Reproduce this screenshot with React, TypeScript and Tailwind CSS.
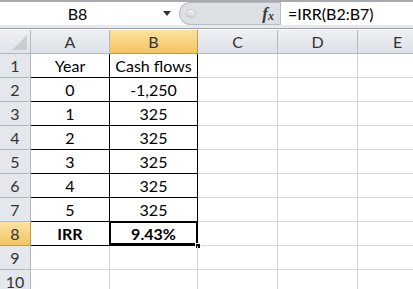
import React from 'react';

// column widths include the right border line
const cols = [
  { key: 'A', w: 'w-[79px]' },
  { key: 'B', w: 'w-[88px]' },
  { key: 'C', w: 'w-[80px]' },
  { key: 'D', w: 'w-[80px]' },
  { key: 'E', w: 'w-[80px]' },
];

const data: [string, string][] = [
  ['Year', 'Cash flows'],
  ['0', '-1,250'],
  ['1', '325'],
  ['2', '325'],
  ['3', '325'],
  ['4', '325'],
  ['5', '325'],
  ['IRR', '9.43%'],
  ['', ''],
  ['', ''],
];

const FormulaBar: React.FC = () => (
  <div className="border-t-2 border-[#a7abb0]">
    <div className="flex h-[23px] items-stretch bg-white">
      <div className="relative flex w-[179px] shrink-0 items-center">
        <span className="w-[155px] text-center text-[16px] text-black">B8</span>
        <span className="absolute left-[163px] top-[9px] h-0 w-0 border-x-[4px] border-t-[5px] border-x-transparent border-t-[#333]" />
      </div>
      <div className="flex w-[101px] shrink-0 items-center rounded-l-full border border-r-0 border-[#b8bcc2] bg-[#dcdfe3]">
        <span className="ml-[6px] h-[9px] w-[10px] rounded-full border border-[#c4c7cc] bg-gradient-to-b from-[#f4f5f6] to-[#cfd2d6]" />
        <span className="ml-auto mr-[6px] font-['Liberation_Serif'] text-[17px] font-bold italic leading-none text-[#3a3a3a]">
          f<span className="relative top-[1px] text-[12px]">x</span>
        </span>
      </div>
      <div className="flex flex-1 items-center border-l border-[#b8bcc2] pl-[7px] text-[16px] text-black">
        =IRR(B2:B7)
      </div>
    </div>
    <div className="h-[4px] border-b border-[#9ea4ab] bg-[#e6e9ed]" />
  </div>
);

const App: React.FC = () => {
  return (
    <div className="h-[289px] w-[413px] overflow-hidden bg-white font-['Lato',sans-serif] text-[16px] text-black">
      <FormulaBar />

      {/* column headers */}
      <div className="mt-px flex h-[24px]">
        <div className="relative w-[31px] shrink-0 border-r border-b border-[#b2b8bf] bg-gradient-to-b from-[#eef0f3] to-[#e0e4e9]">
          <svg className="absolute bottom-[3px] right-[3px]" width="15" height="15" viewBox="0 0 15 15">
            <polygon points="15,0 15,15 0,15" fill="#c9cdd2" />
          </svg>
        </div>
        {cols.map((c) => (
          <div
            key={c.key}
            className={`${c.w} flex shrink-0 items-center justify-center border-r border-b ${
              c.key === 'B'
                ? 'border-[#c29b46] bg-gradient-to-b from-[#fbe3a0] to-[#f3c35f]'
                : 'border-[#b2b8bf] bg-gradient-to-b from-[#eef0f3] to-[#dde2e8]'
            } text-[#333]`}
          >
            {c.key}
          </div>
        ))}
      </div>

      {/* rows */}
      {data.map(([a, b], i) => {
        const row = i + 1;
        const sel = row === 8;
        const boxed = row <= 8;
        return (
          <div key={row} className="flex h-[24px]">
            <div
              className={`flex w-[31px] shrink-0 items-center justify-center border-r border-b ${
                sel
                  ? 'border-[#c29b46] bg-gradient-to-b from-[#fbe3a0] to-[#f3c35f]'
                  : 'border-[#b2b8bf] bg-[#e4e8ed]'
              } text-[#333]`}
            >
              {row}
            </div>
            <div
              className={`flex w-[79px] shrink-0 items-center justify-center border-r border-b ${
                boxed ? 'border-black' : 'border-[#d4d4d4]'
              } ${sel ? 'font-bold' : ''}`}
            >
              {a}
            </div>
            <div
              className={`relative flex w-[88px] shrink-0 items-center justify-center border-r border-b ${
                boxed ? 'border-black' : 'border-[#d4d4d4]'
              } ${sel ? 'font-bold' : ''}`}
            >
              {sel && (
                <>
                  <div className="pointer-events-none absolute -left-[1px] -top-[1px] h-[24px] w-[89px] border-2 border-black" />
                  <div className="absolute -bottom-[4px] -right-[4px] h-[6px] w-[6px] border border-white bg-black" />
                </>
              )}
              {b}
            </div>
            <div className="w-[80px] shrink-0 border-r border-b border-[#d4d4d4]" />
            <div className="w-[80px] shrink-0 border-r border-b border-[#d4d4d4]" />
            <div className="w-[80px] shrink-0 border-r border-b border-[#d4d4d4]" />
          </div>
        );
      })}
    </div>
  );
};

export default App;
